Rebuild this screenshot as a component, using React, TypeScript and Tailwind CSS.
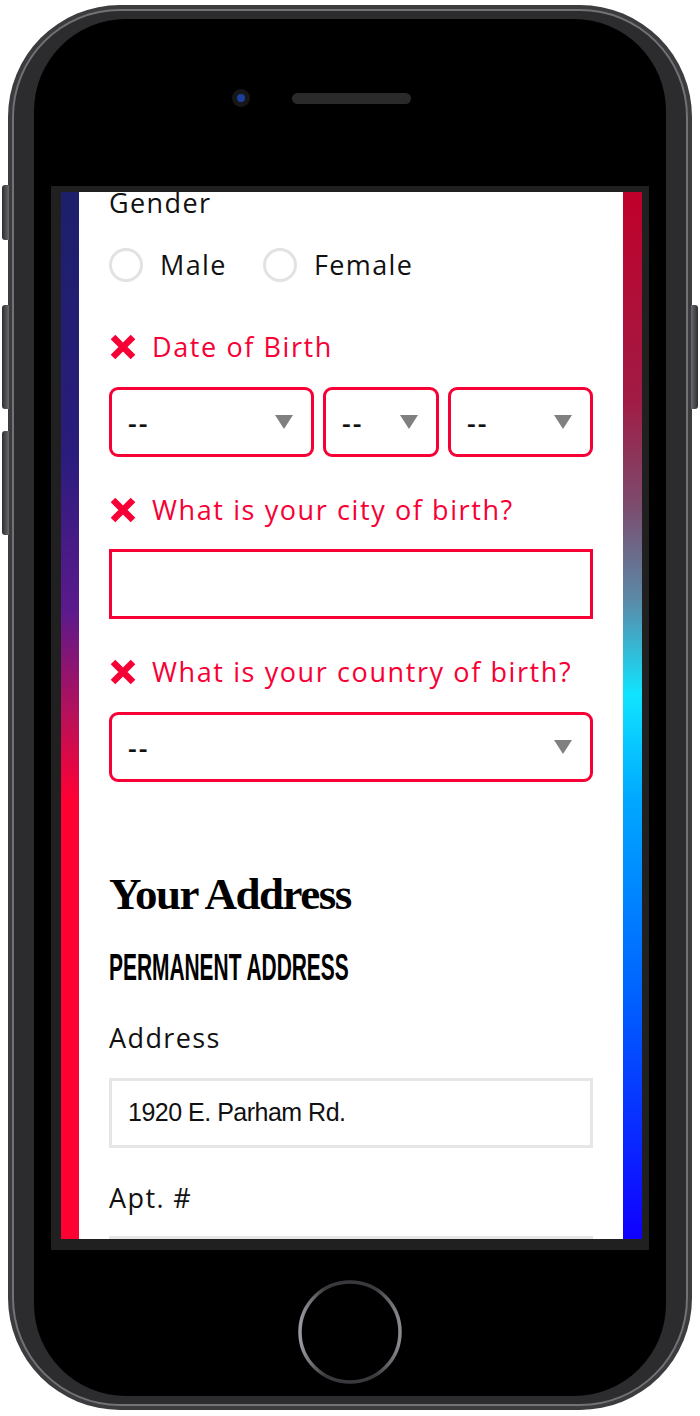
const RED = "#f70035";

function XIcon() {
  return (
    <svg width="28" height="28" viewBox="0 0 28 28" className="shrink-0">
      <path d="M4 4L24 24M24 4L4 24" stroke={RED} strokeWidth="6.5" />
    </svg>
  );
}

function ErrorLabel({ text }: { text: string }) {
  return (
    <div className="flex h-[32px] items-center gap-[15px] text-[27px] leading-[32px] tracking-[1.6px] text-[#f70035]">
      <XIcon />
      <span>{text}</span>
    </div>
  );
}

function Caret() {
  return (
    <svg width="18" height="14" viewBox="0 0 18 14" className="shrink-0">
      <path d="M0 0H18L9 14Z" fill="#808080" />
    </svg>
  );
}

function ErrorSelect() {
  return (
    <div className="flex h-[70px] items-center justify-between rounded-[9px] border-[3px] border-[#f70035] pl-[16px] pr-[18px]">
      <span className="text-[27px] font-semibold leading-none tracking-[2px] text-[#111]">--</span>
      <Caret />
    </div>
  );
}

function Radio({ label }: { label: string }) {
  return (
    <div className="flex items-center gap-[17px]">
      <span className="h-[34px] w-[34px] rounded-full border-[3px] border-[#e2e2e2]" />
      <span className="text-[27px] leading-[32px] tracking-[1.4px] text-[#111]">{label}</span>
    </div>
  );
}

function FormContent() {
  return (
    <div className="-mt-[5px] flex flex-col font-['Open_Sans',sans-serif]">
      {/* Gender */}
      <div className="text-[27px] leading-[32px] tracking-[1.4px] text-[#111]">Gender</div>
      <div className="mt-[29px] flex items-center gap-[36px]">
        <Radio label="Male" />
        <Radio label="Female" />
      </div>

      {/* Date of birth */}
      <div className="mt-[49px]">
        <ErrorLabel text="Date of Birth" />
      </div>
      <div className="mt-[24px] grid grid-cols-[205px_116px_145px] gap-[9px]">
        <ErrorSelect />
        <ErrorSelect />
        <ErrorSelect />
      </div>

      {/* City of birth */}
      <div className="mt-[37px]">
        <ErrorLabel text="What is your city of birth?" />
      </div>
      <div className="mt-[23px] h-[70px] border-[3px] border-[#f70035]" />

      {/* Country of birth */}
      <div className="mt-[37px]">
        <ErrorLabel text="What is your country of birth?" />
      </div>
      <div className="mt-[24px]">
        <ErrorSelect />
      </div>

      {/* Address */}
      <h2 className="mt-[86px] font-['Liberation_Serif',serif] text-[45px] font-bold leading-[52px] tracking-[-1.5px] text-black">
        Your Address
      </h2>
      <div className="mt-[30px] h-[36px]">
        <span className="inline-block origin-left scale-x-[0.565] whitespace-nowrap font-['Liberation_Sans',sans-serif] text-[37px] font-bold leading-[36px] text-black">
          PERMANENT ADDRESS
        </span>
      </div>

      <div className="mt-[36px] text-[27px] leading-[32px] tracking-[1.4px] text-[#111]">Address</div>
      <div className="mt-[24px] flex h-[70px] items-center border-[3px] border-[#e6e6e6] pl-[16px] font-['Liberation_Sans',sans-serif] text-[25px] tracking-[-0.5px] text-[#111]">
        1920 E. Parham Rd.
      </div>

      <div className="mt-[34px] text-[27px] leading-[32px] tracking-[1.4px] text-[#111]">Apt. #</div>
      <div className="mt-[22px] h-[70px] shrink-0 border-[3px] border-[#e6e6e6]" />
    </div>
  );
}

export default function App() {
  return (
    <div className="h-[1416px] w-[700px] overflow-hidden bg-white pt-[5px]">
      <div className="relative mx-[8px] h-[1405px] rounded-[112px] bg-[#3c3c3f] p-[4px]">
        {/* side buttons */}
        <div className="absolute left-[-6px] top-[180px] h-[55px] w-[7px] rounded-l-[3px] bg-[linear-gradient(to_right,#2e2e30,#6a6a6e)]" />
        <div className="absolute left-[-6px] top-[300px] h-[104px] w-[7px] rounded-l-[3px] bg-[linear-gradient(to_right,#2e2e30,#6a6a6e)]" />
        <div className="absolute left-[-6px] top-[426px] h-[104px] w-[7px] rounded-l-[3px] bg-[linear-gradient(to_right,#2e2e30,#6a6a6e)]" />
        <div className="absolute right-[-6px] top-[300px] h-[104px] w-[7px] rounded-r-[3px] bg-[linear-gradient(to_left,#2e2e30,#6a6a6e)]" />

        <div className="h-full rounded-[108px] bg-[#727276] p-[2px]">
          <div className="h-full rounded-[106px] bg-[#2c2c2e] px-[20px] py-[8px]">
            <div className="flex h-full flex-col items-center rounded-[92px] bg-black">
              {/* camera + speaker */}
              <div className="mt-[70px] flex items-center">
                <div className="flex h-[18px] w-[18px] items-center justify-center rounded-full bg-[#17171a]">
                  <div className="h-[8px] w-[8px] rounded-full bg-[#1d3f9e]" />
                </div>
                <div className="ml-[42px] h-[11px] w-[119px] rounded-full bg-[#2a2a2a]" />
                <div className="w-[58px]" />
              </div>

              {/* screen */}
              <div className="mt-[79px] flex h-[1064px] w-[598px] bg-[#202020] pb-[11px] pl-[10px] pr-[7px] pt-[6px]">
                <div className="w-[18px] bg-[linear-gradient(to_bottom,#1c1f6a_0%,#2a1c7c_25%,#5b1a8c_40%,#c10f55_51%,#ff0033_58%,#ff0033_100%)]" />
                <div className="flex-1 overflow-hidden bg-white px-[30px]">
                  <FormContent />
                </div>
                <div className="w-[19px] bg-[linear-gradient(to_bottom,#c0002a_0%,#a01c45_20%,#7c4c6e_30%,#5a8aa8_39%,#10e4ff_48%,#00a8ff_58%,#0060ff_77%,#1000ff_100%)]" />
              </div>

              {/* home button */}
              <svg width="106" height="106" viewBox="0 0 106 106" className="mt-[29px]">
                <defs>
                  <linearGradient id="ring" x1="0" y1="0" x2="1" y2="0">
                    <stop offset="0" stopColor="#9a9aa0" />
                    <stop offset="0.25" stopColor="#3a3a3e" />
                    <stop offset="0.75" stopColor="#3a3a3e" />
                    <stop offset="1" stopColor="#8a8a90" />
                  </linearGradient>
                </defs>
                <circle cx="53" cy="53" r="50" fill="none" stroke="url(#ring)" strokeWidth="3.5" />
              </svg>
            </div>
          </div>
        </div>
      </div>
    </div>
  );
}
